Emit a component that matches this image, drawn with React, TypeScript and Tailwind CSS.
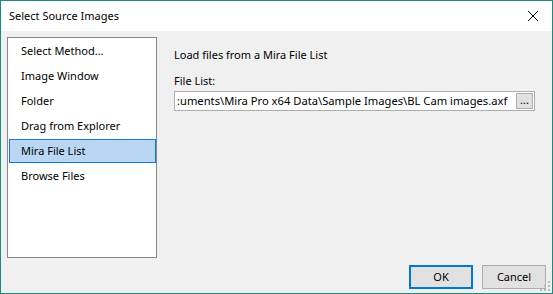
import React from "react";

const items = [
  "Select Method…",
  "Image Window",
  "Folder",
  "Drag from Explorer",
  "Mira File List",
  "Browse Files",
];

export default function App() {
  const font = { fontFamily: '"Noto Sans", "Open Sans", sans-serif' };
  return (
    <div
      className="relative w-[553px] h-[294px] border border-[#1b8b7d] flex flex-col text-[11px] text-black leading-[16px]"
      style={font}
    >
      <div className="h-[30px] bg-white flex items-center pl-[8px] pr-[10px] shrink-0">
        <span className="flex-1 text-[11px]">Select Source Images</span>
        <svg width="12" height="12" viewBox="0 0 12 12" className="mr-[3px]">
          <path d="M1 1 L11 11 M11 1 L1 11" stroke="#000" strokeWidth="1" />
        </svg>
      </div>
      <div className="flex-1 bg-[#f0f0f0] flex flex-col pt-[6px] px-[6px] pb-[4px]">
        <div className="flex h-[221px]">
          <div className="w-[150px] h-full border border-[#828790] bg-white pt-[1px] pl-[1px]">
            {items.map((it) => {
              const sel = it === "Mira File List";
              return (
                <div
                  key={it}
                  className={
                    "h-[24px] mb-[1px] flex items-center pl-[11px] border " +
                    (sel ? "bg-[#b9d7f2] border-[#0f7bd5]" : "border-transparent")
                  }
                >
                  {it}
                </div>
              );
            })}
          </div>
          <div className="ml-[17px] w-[361px] flex flex-col">
            <div className="mt-[10px]">Load files from a Mira File List</div>
            <div className="mt-[10px]">File List:</div>
            <div className="mt-[2px] h-[20px] border border-[#adadad] bg-white flex items-center pl-[2px] pr-[1px]">
              <span className="flex-1 whitespace-nowrap overflow-hidden text-[11.2px]">
                :uments\Mira Pro x64 Data\Sample Images\BL Cam images.axf
              </span>
              <div className="w-[17px] h-[16px] border border-[#adadad] bg-[#e1e1e1] flex items-center justify-center text-[11px] leading-none pb-[3px] shrink-0">
                ...
              </div>
            </div>
          </div>
        </div>
        <div className="mt-[7px] flex justify-end gap-[9px]">
          <div className="w-[64px] h-[24px] border-2 border-[#0078d7] bg-[#e1e1e1] flex items-center justify-center">
            OK
          </div>
          <div className="w-[64px] h-[24px] border border-[#adadad] bg-[#e1e1e1] flex items-center justify-center">
            Cancel
          </div>
        </div>
      </div>
      <svg
        className="absolute right-[1px] bottom-[1px]"
        width="12"
        height="12"
        viewBox="0 0 12 12"
      >
        {[
          [9, 1],
          [9, 5],
          [5, 5],
          [9, 9],
          [5, 9],
          [1, 9],
        ].map(([x, y], i) => (
          <rect key={i} x={x} y={y} width="2" height="2" fill="#bcbcbc" />
        ))}
      </svg>
    </div>
  );
}
